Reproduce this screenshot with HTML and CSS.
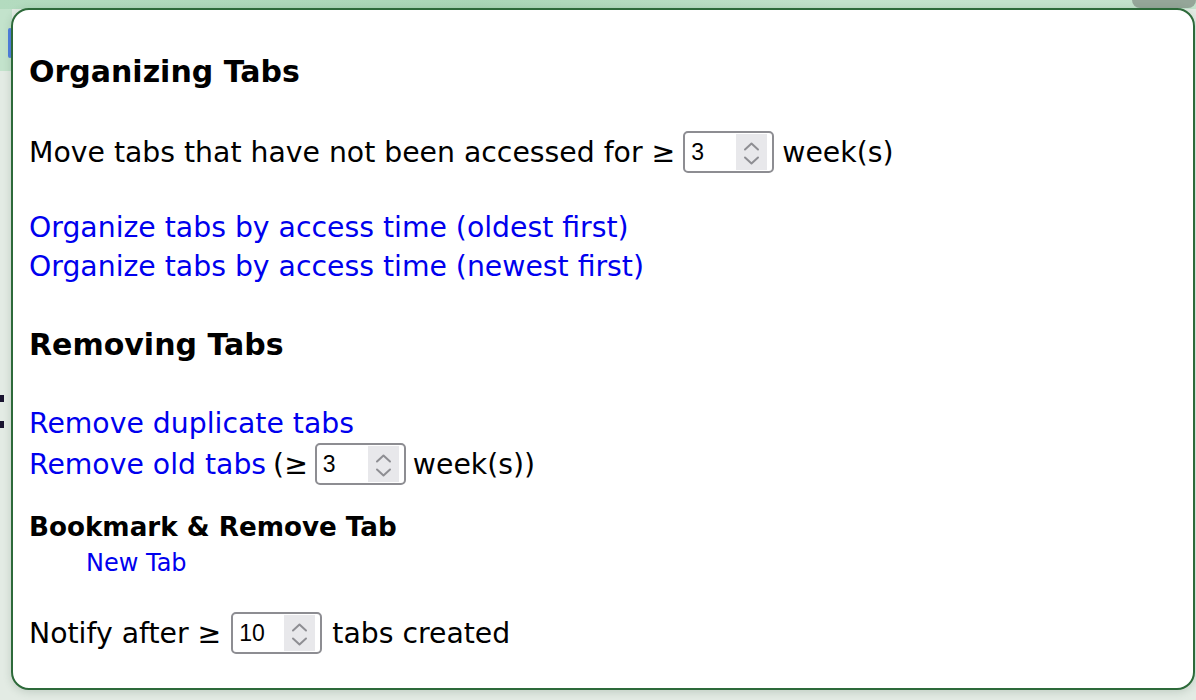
FILE: index.html
```html
<!DOCTYPE html>
<html>
<head>
<meta charset="utf-8">
<link rel="stylesheet" href="styles.css">
</head>
<body>
<div class="backdrop">
  <div class="bd-top"></div>
  <div class="bd-pill"></div>
  <div class="bd-left-green"></div>
  <div class="bd-blue"></div>
  <div class="bd-dot bd-dot1"></div>
  <div class="bd-dot bd-dot2"></div>
</div>
<div class="popup">
  <h2 class="heading h-first">Organizing Tabs</h2>
  <div class="row row-move">
    <span>Move tabs that have not been accessed for ≥</span>
    <span class="num"><span class="num-val">3</span><span class="spin"><svg viewBox="0 0 31 36" width="31" height="36"><path d="M9 15.5 L15.5 9.5 L22 15.5" /><path d="M9 23.5 L15.5 29.5 L22 23.5" /></svg></span></span>
    <span>week(s)</span>
  </div>
  <div class="links links-org">
    <a class="link" href="#">Organize tabs by access time (oldest first)</a>
    <a class="link" href="#">Organize tabs by access time (newest first)</a>
  </div>
  <h2 class="heading h-second">Removing Tabs</h2>
  <div class="links links-rem">
    <a class="link" href="#">Remove duplicate tabs</a>
  </div>
  <div class="row row-old">
    <a class="link" href="#">Remove old tabs</a>
    <span class="paren">(≥</span>
    <span class="num"><span class="num-val">3</span><span class="spin"><svg viewBox="0 0 31 36" width="31" height="36"><path d="M9 15.5 L15.5 9.5 L22 15.5" /><path d="M9 23.5 L15.5 29.5 L22 23.5" /></svg></span></span>
    <span>week(s))</span>
  </div>
  <h3 class="subhead">Bookmark &amp; Remove Tab</h3>
  <div class="tablist">
    <a class="link small" href="#">New Tab</a>
  </div>
  <div class="row row-notify">
    <span>Notify after ≥</span>
    <span class="num"><span class="num-val">10</span><span class="spin"><svg viewBox="0 0 31 36" width="31" height="36"><path d="M9 15.5 L15.5 9.5 L22 15.5" /><path d="M9 23.5 L15.5 29.5 L22 23.5" /></svg></span></span>
    <span>tabs created</span>
  </div>
</div>
</body>
</html>
```
FILE: styles.css
```css
html, body {
  margin: 0;
  padding: 0;
}
body {
  width: 1196px;
  height: 700px;
  overflow: hidden;
  background: #e3ebe4;
  position: relative;
  font-family: "DejaVu Sans", "Open Sans", sans-serif;
  color: #000;
  padding: 8px 0 0 11px;
  box-sizing: border-box;
}
.backdrop {
  position: absolute;
  inset: 0;
  z-index: 0;
}
.bd-top {
  position: absolute;
  left: 0; top: 0;
  width: 1196px; height: 9px;
  background: linear-gradient(90deg, #b3dbbf 0%, #a9d6b6 40%, #c2e2cb 70%, #c4e2cd 100%);
}
.bd-pill {
  position: absolute;
  left: 1132px; top: -10px;
  width: 64px; height: 18px;
  border-radius: 8px;
  background: #95a699;
}
.bd-left-green {
  position: absolute;
  left: 0; top: 9px;
  width: 12px; height: 62px;
  background: #c3e3cc;
}
.bd-blue {
  position: absolute;
  left: 8px; top: 28px;
  width: 4px; height: 30px;
  border-radius: 2px;
  background: #4f7fe0;
}
.bd-dot {
  position: absolute;
  left: 0;
  width: 4px; height: 7px;
  background: #1a1530;
}
.bd-dot1 { top: 395px; }
.bd-dot2 { top: 421px; }

.popup {
  position: relative;
  z-index: 1;
  width: 1184px;
  height: 682px;
  box-sizing: border-box;
  background: #fff;
  border: 2px solid #2d6a3a;
  border-radius: 18px;
  box-shadow: 0 2px 8px rgba(40, 70, 50, 0.18);
  padding: 16px 16px 0 16px;
  display: flex;
  flex-direction: column;
  align-items: flex-start;
  font-size: 28.3px;
  line-height: 39px;
}
.heading {
  margin: 0;
  font-size: 30px;
  font-weight: 700;
  line-height: 40px;
}
.h-first { margin-top: 26px; }
.h-second { margin-top: 39px; }
.row {
  display: flex;
  align-items: center;
  gap: 10px;
  height: 42px;
}
.row-move { margin-top: 39px; gap: 8px; }
.row-old { margin-top: 0; gap: 7px; }
.row-notify { margin-top: 32px; }
.links {
  display: flex;
  flex-direction: column;
}
.links-org { margin-top: 35px; }
.links-rem { margin-top: 39px; }
.link {
  color: #0000ee;
  text-decoration: none;
}
.subhead {
  margin: 23px 0 0 0;
  font-size: 26.2px;
  font-weight: 700;
  line-height: 39px;
}
.tablist {
  padding-left: 57px;
  height: 33px;
  display: flex;
  align-items: center;
}
.small {
  font-size: 24px;
  line-height: 33px;
}
.num {
  display: inline-flex;
  align-items: center;
  box-sizing: border-box;
  width: 91px;
  height: 42px;
  border: 2px solid #8d8d92;
  border-radius: 5px;
  padding: 1px 5px 1px 6px;
  background: #fff;
  justify-content: space-between;
}
.num-val {
  font-family: "Liberation Sans", Arial, sans-serif;
  font-size: 23px;
  line-height: 36px;
}
.spin {
  width: 31px;
  height: 36px;
  background: #e8e8eb;
  display: block;
}
.spin svg {
  display: block;
  fill: none;
  stroke: #8e8e93;
  stroke-width: 2;
  stroke-linecap: round;
  stroke-linejoin: round;
}
```
